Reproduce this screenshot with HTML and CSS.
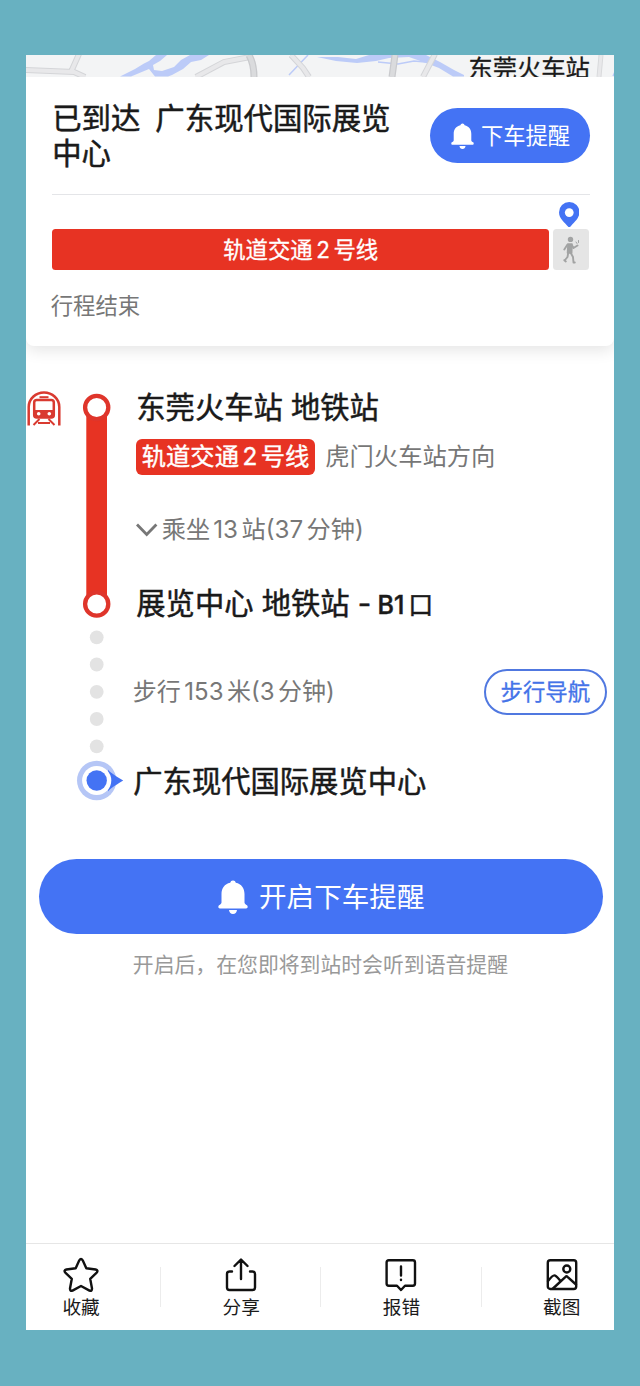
FILE: index.html
```html
<!DOCTYPE html>
<html lang="zh-CN">
<head>
<meta charset="utf-8">
<title>公交路线</title>
<link rel="stylesheet" href="styles.css">
</head>
<body>
<main class="phone">
  <section class="map">
    <svg class="map-art" viewBox="0 0 588.5 21.5" width="588.5" height="21.5" fill="none">
      <g fill="#bccbf8">
        <path d="M94 21.500L109 14L118 8.500L123 6L130 0H141L134 6L127 10L128 15L136 16L148 12L155 5L164 0H183L175 5L165 7L157 14L146 20L142 21.500H129L123 14L111 19L105 21.500Z"/>
        <path d="M291 2H312L330 4L343 0H400L414 7L428 15L438 20V21.500H427L413 13L400 8L383 2L363 3L350 6L331 8L310 6Z"/>
      </g>
      <path d="M352 7L372 9L388 6L410 8M282 0L263 20M587 21L589 17" stroke="#bccbf8" stroke-width="1.500"/>
      <path d="M-2 15L48 17L59 22M45 17L53 -1M170 22L198 7L224 2M265 0L277 13L283 22M409 -1L397 22" stroke="#d4d5d8" stroke-width="6"/>
      <path d="M-2 15L48 17L59 22M45 17L53 -1M170 22L198 7L224 2M265 0L277 13L283 22M409 -1L397 22" stroke="#e8e8ea" stroke-width="4"/>
      <path d="M223 0Q228 9 228 22M369 0L366 22" stroke="#c9cacd" stroke-width="7"/>
      <path d="M223 0Q228 9 228 22M369 0L366 22" stroke="#dadbdd" stroke-width="4.500"/>
      <path d="M575 0L573 22" stroke="#d9dadc" stroke-width="5"/>
      <path d="M575 0L573 22" stroke="#e8e8ea" stroke-width="3"/>
    </svg>
    <span class="map-label">东莞火车站</span>
  </section>

  <section class="summary">
    <div class="summary-head">
      <h1 class="title"><span class="title-status">已到达</span>广东现代国际展览<br>中心</h1>
      <button class="alert-btn">
        <svg class="bell" viewBox="0 0 30 34" fill="#fff"><path d="M15 0.500a2.800 2.800 0 0 1 2.800 2.300C23.500 4 26.500 8.500 26.500 14v8.500c0 1.200 1.200 2 2.500 2.800 1.200 1 .7 3.200-.9 3.200H1.900c-1.600 0-2.100-2.200-.9-3.200 1.300-.8 2.500-1.600 2.500-2.800V14C3.500 8.500 6.500 4 12.200 2.800A2.800 2.800 0 0 1 15 .5ZM11 30h8q-.6 4-4 4t-4-4Z"/></svg>
        <span class="label">下车提醒</span>
      </button>
    </div>
    <div class="plan">
      <div class="plan-line">轨道交通<span class="num">2</span>号线</div>
      <div class="plan-walk">
        <svg class="pin" viewBox="0 0 20 25"><path d="M10 0a10 10 0 0 1 10 10.200C20 16 14.500 20 11 24.300q-1 1.200-2 0C5.500 20 0 16 0 10.200A10 10 0 0 1 10 0Z" fill="#4473f4"/><circle cx="10" cy="10.400" r="4.300" fill="#fff"/></svg>
        <svg class="walker" viewBox="0 0 18 28" fill="none" stroke="#a2a3a3" stroke-linecap="round" stroke-linejoin="round"><circle cx="8.500" cy="3.400" r="2.700" fill="#a2a3a3" stroke="none"/><path d="M6 8L10 8L9.700 17L5.500 17Z" fill="#a2a3a3" stroke-width="1.500"/><path d="M5.500 8.500L2.300 13.500M9.800 9L11.500 12L15.500 9.500M6.200 17L5.500 21L2.600 24.500M8.800 17L11 21L11.500 26.500M2.300 24.200L3.800 25.500M11.500 26.500H12.800" stroke-width="1.900"/><path d="M14 6l1 1.500M16.500 4.500v2" stroke-width="1"/></svg>
      </div>
    </div>
    <p class="ended">行程结束</p>
  </section>

  <section class="route">
    <svg class="train" viewBox="0 0 34 35" fill="none" stroke="#d93a30" stroke-width="2.500"><path d="M1.700 34.500V16a15.300 14.500 0 0 1 30.600 0V34.500"/><rect x="7.200" y="9" width="19.600" height="17.600" rx="2.500"/><path d="M12.500 6.200H21.500" stroke-width="2"/><path d="M7 19H27V27H7Z" fill="#d93a30" stroke="none"/><circle cx="11.700" cy="22.700" r="1.800" fill="#fff" stroke="none"/><circle cx="22.300" cy="22.700" r="1.800" fill="#fff" stroke="none"/><path d="M12.500 28L6.500 34M21.500 28L27.500 34M11 32H23" stroke-width="2"/></svg>
    <svg class="rail" viewBox="0 0 50 420">
      <path d="M10.300 22H31V219H10.300Z" fill="#e73323"/>
      <g fill="#fff" stroke="#df352b" stroke-width="4.300"><circle cx="20.700" cy="22.500" r="11.600"/><circle cx="20.700" cy="219" r="11.600"/></g>
      <g fill="#e3e3e3"><circle cx="20.700" cy="252.300" r="6.900"/><circle cx="20.700" cy="279.500" r="6.900"/><circle cx="20.700" cy="306.800" r="6.900"/><circle cx="20.700" cy="334" r="6.900"/><circle cx="20.700" cy="361.300" r="6.900"/></g>
      <circle cx="20.700" cy="395.500" r="19.700" fill="#b5c6f6"/>
      <path d="M32 384.500Q33 387 47.200 395.500Q33 404 32 406.500Z" fill="#4473f4"/>
      <circle cx="20.700" cy="395.500" r="14.600" fill="#fff"/>
      <circle cx="20.700" cy="395.500" r="10.200" fill="#4473f4"/>
    </svg>
    <div class="stops">
      <h2 class="stop">东莞火车站 地铁站</h2>
      <div class="direction"><span class="badge">轨道交通<span class="num">2</span>号线</span><span>虎门火车站方向</span></div>
      <div class="ride"><svg class="chevron" viewBox="0 0 22 14" fill="none" stroke="#777" stroke-width="2.800"><path d="M1 1.500L10.700 11.500L20.400 1.500"/></svg><span class="label">乘坐<span class="num ride-num">13</span>站(<span class="num-end">37</span>分钟)</span></div>
      <h2 class="stop">展览中心 地铁站 - <span class="exit">B1<span class="exit-word">口</span></span></h2>
      <div class="walk"><span class="label">步行<span class="num">153</span>米(<span class="num-end">3</span>分钟)</span><button class="nav-btn"><span class="label">步行导航</span></button></div>
      <h2 class="stop stop-last">广东现代国际展览中心</h2>
    </div>
  </section>

  <section class="reminder">
    <button class="remind-btn">
      <svg class="bell" viewBox="0 0 30 34" fill="#fff"><path d="M15 0.500a2.800 2.800 0 0 1 2.800 2.300C23.500 4 26.500 8.500 26.500 14v8.500c0 1.200 1.200 2 2.500 2.800 1.200 1 .7 3.200-.9 3.200H1.900c-1.600 0-2.100-2.200-.9-3.200 1.300-.8 2.500-1.600 2.500-2.800V14C3.500 8.500 6.500 4 12.200 2.800A2.800 2.800 0 0 1 15 .5ZM11 30h8q-.6 4-4 4t-4-4Z"/></svg>
      <span class="label">开启下车提醒</span>
    </button>
    <p class="hint">开启后，在您即将到站时会听到语音提醒</p>
  </section>

  <nav class="tabs">
    <a class="tab"><svg class="tab-icon" viewBox="0 0 36 36"><path d="M16.300 3.300Q18 .8 19.700 3.300L23.300 11.300L32.600 12.500Q35.600 13.300 33.700 15.600L27.200 21.800L29 31.500Q29.100 34.400 26.500 33.600L18 29L9.500 33.600Q6.900 34.400 7 31.500L8.800 21.800L2.300 15.600Q.4 13.300 3.400 12.500L12.700 11.300Z"/></svg><span>收藏</span></a>
    <a class="tab"><svg class="tab-icon" viewBox="0 0 36 36"><path d="M9 14.500H6.500Q4 14.500 4 17V30.500Q4 33 6.500 33H29.500Q32 33 32 30.500V17Q32 14.500 29.500 14.500H27M18 22V3M11.500 9L18 2.500L24.500 9"/></svg><span>分享</span></a>
    <a class="tab"><svg class="tab-icon" viewBox="0 0 36 36"><path d="M5.800 3.300H29.800Q32 3.300 32 5.500V26.500Q32 28.700 29.800 28.700H22L18 33L14 28.700H5.800Q3.600 28.700 3.600 26.500V5.500Q3.600 3.300 5.800 3.300ZM18 9.500V18.500M18 22.600V23"/></svg><span>报错</span></a>
    <a class="tab"><svg class="tab-icon" viewBox="0 0 36 36"><rect x="3.800" y="3.300" width="28.400" height="28.700" rx="2.500"/><circle cx="22.800" cy="12" r="3.500"/><path d="M4 24Q9 17.500 11 18.500Q13 19.500 16.500 24M9 31.500L21.500 19.800Q22.500 18.800 23.500 19.800L32 27.500"/></svg><span>截图</span></a>
  </nav>
</main>
</body>
</html>
```
FILE: styles.css
```css
* { box-sizing: border-box; margin: 0; padding: 0; }

body {
  height: 1386px;
  padding: 55px 0 0 25.700px;
  overflow: hidden;
  background: #68b1c1;
  font-family: Inter, "Noto Sans CJK SC", sans-serif;
  color: #1a1a1a;
  white-space: nowrap;
}

button { border: 0; background: none; font: inherit; color: inherit; white-space: nowrap; }
svg { display: block; flex: none; }
.label { display: block; line-height: 30px; }

.phone {
  display: flex;
  flex-direction: column;
  width: 588.700px;
  height: 1275.400px;
  background: #fff;
  overflow: hidden;
}

.map {
  position: relative;
  flex: none;
  height: 21.500px;
  background: #f3f4f5;
  overflow: hidden;
}
.map-label {
  position: absolute;
  top: -2px;
  right: 24.500px;
  font-size: 24.300px;
  line-height: 30px;
  -webkit-text-stroke: 0.300px #1a1a1a;
}

.summary {
  flex: none;
  height: 269px;
  padding: 0 24.500px 0 26.500px;
  background: #fff;
  border-radius: 0 0 8px 8px;
  box-shadow: 0 4px 16px rgba(0, 0, 0, 0.110);
}
.summary-head {
  display: flex;
  justify-content: space-between;
  height: 118.500px;
  padding-top: 25px;
  border-bottom: 1.500px solid #e4e5e8;
}
.title {
  padding-top: 0.800px;
  font-size: 29.400px;
  font-weight: 400;
  line-height: 34.500px;
  -webkit-text-stroke: 0.500px #1a1a1a;
}
.title-status { margin-right: 15px; }
.alert-btn {
  display: flex;
  align-items: center;
  gap: 6.500px;
  width: 160px;
  height: 55px;
  margin-top: 6.500px;
  padding-left: 21.500px;
  border-radius: 28px;
  background: #4473f4;
  color: #fff;
  font-size: 22.300px;
}
.alert-btn .bell { width: 23px; height: 26px; }

.plan { display: flex; gap: 3.500px; height: 41px; margin-top: 34px; }
.plan-line {
  width: 497px;
  border-radius: 3.500px;
  background: #e73323;
  color: #fff;
  font-size: 22.400px;
  line-height: 42px;
  text-align: center;
  -webkit-text-stroke: 0.300px #fff;
}
.plan-walk {
  position: relative;
  display: flex;
  align-items: center;
  justify-content: center;
  width: 36px;
  border-radius: 3.500px;
  background: #e5e5e5;
}
.pin { position: absolute; top: -27.500px; left: 6px; width: 20.500px; height: 25.500px; }
.walker { width: 18px; height: 28px; }
.num { margin: 0 3.500px; }
.ride-num { margin-left: 3px; }
.num-end { margin-right: 3.500px; }
.ended { margin: 20.500px 0 0 -1.500px; font-size: 22.400px; line-height: 30px; color: #777; }

.route { display: flex; flex: none; height: 513.500px; padding-top: 39.500px; }
.train { width: 34px; height: 35px; margin: 5.500px 0 0 1px; }
.rail { width: 50px; height: 420px; margin-left: 15.300px; }
.stops { flex: 1; padding-left: 10.300px; color: #777; }
.stop {
  height: 45px;
  color: #1a1a1a;
  font-size: 29.300px;
  font-weight: 400;
  line-height: 46px;
  -webkit-text-stroke: 0.500px #1a1a1a;
}
.direction { display: flex; gap: 10px; height: 36px; margin-top: 8.500px; font-size: 24.300px; line-height: 35px; }
.badge {
  width: 179px;
  padding-left: 5.500px;
  border-radius: 6px;
  background: #e73323;
  color: #fff;
  -webkit-text-stroke: 0.400px #fff;
}
.ride { display: flex; align-items: center; gap: 3.500px; height: 40px; margin: 35.500px 0 31px; font-size: 24.200px; }
.chevron { width: 22px; height: 14px; }
.exit { margin-left: -2px; font-size: 25px; font-weight: 500; }
.exit-word { margin-left: 4px; font-weight: 400; }
.walk {
  display: flex;
  align-items: center;
  justify-content: space-between;
  height: 46px;
  margin: 43px 7.500px 43.500px -3.500px;
  font-size: 24px;
}
.nav-btn {
  width: 123px;
  height: 46px;
  border: 2px solid #5078e0;
  border-radius: 23px;
  color: #4473e8;
  font-size: 22.400px;
  -webkit-text-stroke: 0.300px #4473e8;
}
.stop-last { margin-left: -3px; line-height: 45px; }

.reminder { padding: 0 11px 0 13.300px; }
.remind-btn {
  display: flex;
  align-items: center;
  gap: 11px;
  width: 564.500px;
  height: 75px;
  padding-left: 179px;
  border-radius: 38px;
  background: #4473f4;
  color: #fff;
  font-size: 27.600px;
}
.remind-btn .bell { width: 30px; height: 34px; }
.hint { margin: 16px 0 0 -1.500px; color: #999; font-size: 20.850px; line-height: 30px; text-align: center; }

.tabs {
  display: grid;
  grid-template-columns: repeat(4, 160.200px);
  flex: none;
  height: 87.500px;
  margin: auto -27px 0 -24.700px;
  padding-top: 13.500px;
  border-top: 1.500px solid #e6e6e6;
}
.tab {
  position: relative;
  display: flex;
  flex-direction: column;
  align-items: center;
  font-size: 18.700px;
  line-height: 29.500px;
}
.tab + .tab::before {
  content: "";
  position: absolute;
  top: 10px;
  left: -1px;
  width: 1px;
  height: 40px;
  background: #ececec;
}
.tab-icon {
  width: 36px;
  height: 36px;
  fill: none;
  stroke: #111;
  stroke-width: 2.400px;
  stroke-linecap: round;
  stroke-linejoin: round;
}
```
